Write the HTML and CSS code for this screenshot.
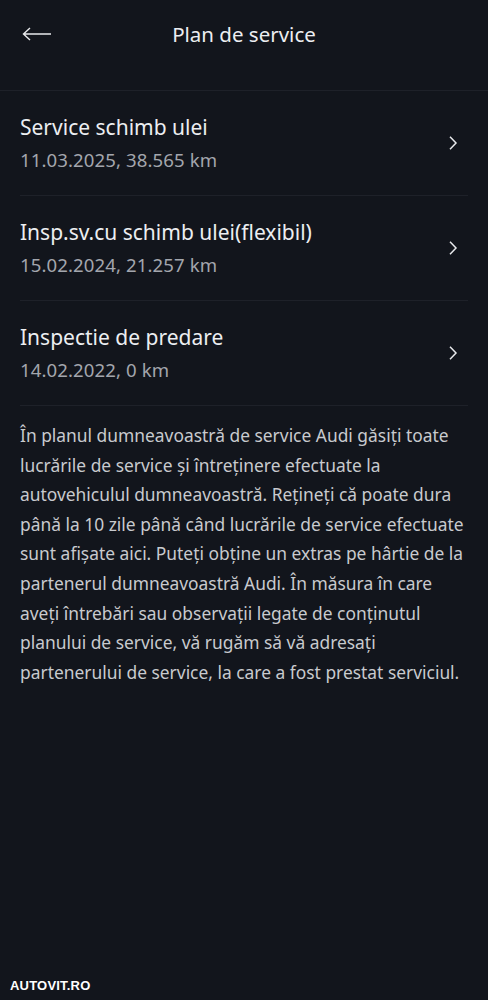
FILE: index.html
```html
<!DOCTYPE html>
<html lang="ro">
<head>
<meta charset="utf-8">
<link rel="stylesheet" href="styles.css">
</head>
<body>
<div class="screen">
  <header class="topbar">
    <svg class="back" width="30" height="14" viewBox="0 0 30 14"><path d="M29 7H2M8 1L1.5 7L8 13" fill="none" stroke="#e8e9ec" stroke-width="1.4"/></svg>
    <h1 class="title">Plan de service</h1>
  </header>
  <ul class="list">
    <li class="item">
      <div class="texts">
        <div class="name">Service schimb ulei</div>
        <div class="meta">11.03.2025, 38.565 km</div>
      </div>
      <svg class="chev" width="10" height="16" viewBox="0 0 10 16"><path d="M2 1.8L8 8L2 14.2" fill="none" stroke="#e8e9ec" stroke-width="1.5"/></svg>
    </li>
    <li class="item">
      <div class="texts">
        <div class="name">Insp.sv.cu schimb ulei(flexibil)</div>
        <div class="meta">15.02.2024, 21.257 km</div>
      </div>
      <svg class="chev" width="10" height="16" viewBox="0 0 10 16"><path d="M2 1.8L8 8L2 14.2" fill="none" stroke="#e8e9ec" stroke-width="1.5"/></svg>
    </li>
    <li class="item">
      <div class="texts">
        <div class="name">Inspectie de predare</div>
        <div class="meta">14.02.2022, 0 km</div>
      </div>
      <svg class="chev" width="10" height="16" viewBox="0 0 10 16"><path d="M2 1.8L8 8L2 14.2" fill="none" stroke="#e8e9ec" stroke-width="1.5"/></svg>
    </li>
  </ul>
  <p class="info">În planul dumneavoastră de service Audi găsiţi toate<br>lucrările de service şi întreţinere efectuate la<br>autovehiculul dumneavoastră. Reţineţi că poate dura<br>până la 10 zile până când lucrările de service efectuate<br>sunt afişate aici. Puteţi obţine un extras pe hârtie de la<br>partenerul dumneavoastră Audi. În măsura în care<br>aveţi întrebări sau observaţii legate de conţinutul<br>planului de service, vă rugăm să vă adresaţi<br>partenerului de service, la care a fost prestat serviciul.</p>
  <div class="watermark">AUTOVIT.RO</div>
</div>
</body>
</html>
```
FILE: styles.css
```css
html, body {
  margin: 0;
  padding: 0;
  background: #12151c;
}
.screen {
  position: relative;
  width: 488px;
  height: 1000px;
  background: #12151c;
  font-family: "Noto Sans", "Open Sans", sans-serif;
  color: #eceef1;
  overflow: hidden;
}
.topbar {
  position: relative;
  height: 90px;
  display: flex;
  align-items: flex-start;
  justify-content: center;
  border-bottom: 1px solid #1e2129;
}
.back {
  position: absolute;
  left: 22px;
  top: 27px;
}
.title {
  margin: 19px 0 0;
  font-size: 20.5px;
  font-weight: 400;
  line-height: 30px;
  color: #eceef1;
}
.list {
  list-style: none;
  margin: 0 20px;
  padding: 0;
}
.item {
  height: 105px;
  box-sizing: border-box;
  padding-top: 22px;
  display: flex;
  align-items: flex-start;
  justify-content: space-between;
  border-bottom: 1px solid #1e2129;
}
.texts {
  display: flex;
  flex-direction: column;
  gap: 7px;
}
.name {
  font-size: 21px;
  line-height: 28px;
  color: #eceef1;
}
.meta {
  font-size: 18.6px;
  line-height: 24px;
  color: #a3a6ad;
  letter-spacing: 0.1px;
}
.chev {
  margin-right: 10px;
  margin-top: 22px;
}
.info {
  margin: 15px 0 0 20px;
  font-size: 17.4px;
  line-height: 29.6px;
  color: #c8cace;
  white-space: nowrap;
}
.watermark {
  position: absolute;
  left: 10px;
  bottom: 7px;
  font-family: "Liberation Sans", sans-serif;
  font-weight: 700;
  font-size: 13px;
  color: #ffffff;
  letter-spacing: 0.2px;
}
```
